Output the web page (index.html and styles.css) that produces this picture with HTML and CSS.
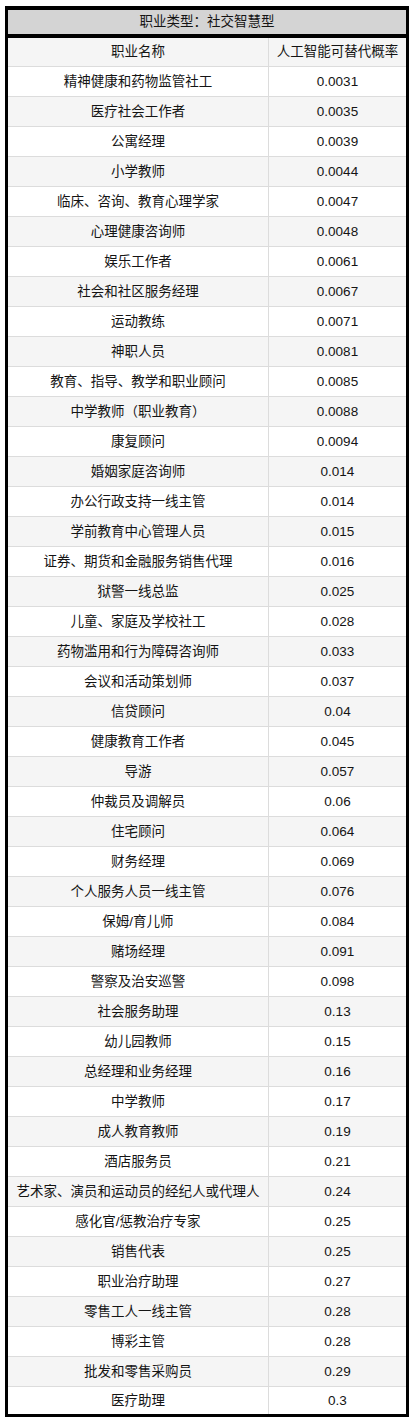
FILE: index.html
```html
<!DOCTYPE html>
<html lang="zh-CN">
<head>
<meta charset="utf-8">
<title>职业类型：社交智慧型</title>
<link rel="stylesheet" href="styles.css">
</head>
<body>
<div class="sheet">
  <div class="title">职业类型：社交智慧型</div>
  <div class="row head"><div class="c1">职业名称</div><div class="c2">人工智能可替代概率</div></div>
  <div class="row"><div class="c1">精神健康和药物监管社工</div><div class="c2">0.0031</div></div>
  <div class="row"><div class="c1">医疗社会工作者</div><div class="c2">0.0035</div></div>
  <div class="row"><div class="c1">公寓经理</div><div class="c2">0.0039</div></div>
  <div class="row"><div class="c1">小学教师</div><div class="c2">0.0044</div></div>
  <div class="row"><div class="c1">临床、咨询、教育心理学家</div><div class="c2">0.0047</div></div>
  <div class="row"><div class="c1">心理健康咨询师</div><div class="c2">0.0048</div></div>
  <div class="row"><div class="c1">娱乐工作者</div><div class="c2">0.0061</div></div>
  <div class="row"><div class="c1">社会和社区服务经理</div><div class="c2">0.0067</div></div>
  <div class="row"><div class="c1">运动教练</div><div class="c2">0.0071</div></div>
  <div class="row"><div class="c1">神职人员</div><div class="c2">0.0081</div></div>
  <div class="row"><div class="c1">教育、指导、教学和职业顾问</div><div class="c2">0.0085</div></div>
  <div class="row"><div class="c1">中学教师（职业教育）</div><div class="c2">0.0088</div></div>
  <div class="row"><div class="c1">康复顾问</div><div class="c2">0.0094</div></div>
  <div class="row"><div class="c1">婚姻家庭咨询师</div><div class="c2">0.014</div></div>
  <div class="row"><div class="c1">办公行政支持一线主管</div><div class="c2">0.014</div></div>
  <div class="row"><div class="c1">学前教育中心管理人员</div><div class="c2">0.015</div></div>
  <div class="row"><div class="c1">证券、期货和金融服务销售代理</div><div class="c2">0.016</div></div>
  <div class="row"><div class="c1">狱警一线总监</div><div class="c2">0.025</div></div>
  <div class="row"><div class="c1">儿童、家庭及学校社工</div><div class="c2">0.028</div></div>
  <div class="row"><div class="c1">药物滥用和行为障碍咨询师</div><div class="c2">0.033</div></div>
  <div class="row"><div class="c1">会议和活动策划师</div><div class="c2">0.037</div></div>
  <div class="row"><div class="c1">信贷顾问</div><div class="c2">0.04</div></div>
  <div class="row"><div class="c1">健康教育工作者</div><div class="c2">0.045</div></div>
  <div class="row"><div class="c1">导游</div><div class="c2">0.057</div></div>
  <div class="row"><div class="c1">仲裁员及调解员</div><div class="c2">0.06</div></div>
  <div class="row"><div class="c1">住宅顾问</div><div class="c2">0.064</div></div>
  <div class="row"><div class="c1">财务经理</div><div class="c2">0.069</div></div>
  <div class="row"><div class="c1">个人服务人员一线主管</div><div class="c2">0.076</div></div>
  <div class="row"><div class="c1">保姆/育儿师</div><div class="c2">0.084</div></div>
  <div class="row"><div class="c1">赌场经理</div><div class="c2">0.091</div></div>
  <div class="row"><div class="c1">警察及治安巡警</div><div class="c2">0.098</div></div>
  <div class="row"><div class="c1">社会服务助理</div><div class="c2">0.13</div></div>
  <div class="row"><div class="c1">幼儿园教师</div><div class="c2">0.15</div></div>
  <div class="row"><div class="c1">总经理和业务经理</div><div class="c2">0.16</div></div>
  <div class="row"><div class="c1">中学教师</div><div class="c2">0.17</div></div>
  <div class="row"><div class="c1">成人教育教师</div><div class="c2">0.19</div></div>
  <div class="row"><div class="c1">酒店服务员</div><div class="c2">0.21</div></div>
  <div class="row"><div class="c1">艺术家、演员和运动员的经纪人或代理人</div><div class="c2">0.24</div></div>
  <div class="row"><div class="c1">感化官/惩教治疗专家</div><div class="c2">0.25</div></div>
  <div class="row"><div class="c1">销售代表</div><div class="c2">0.25</div></div>
  <div class="row"><div class="c1">职业治疗助理</div><div class="c2">0.27</div></div>
  <div class="row"><div class="c1">零售工人一线主管</div><div class="c2">0.28</div></div>
  <div class="row"><div class="c1">博彩主管</div><div class="c2">0.28</div></div>
  <div class="row"><div class="c1">批发和零售采购员</div><div class="c2">0.29</div></div>
  <div class="row"><div class="c1">医疗助理</div><div class="c2">0.3</div></div>
</div>
</body>
</html>
```

FILE: styles.css
```css
html, body {
  margin: 0;
  padding: 0;
  background: #ffffff;
}
body {
  padding: 6px 0 0 5px;
  font-family: "Liberation Sans", "Noto Sans CJK SC", sans-serif;
  font-size: 13.5px;
  color: #141414;
}
.sheet {
  width: 398px;
  border: 3px solid #000000;
  border-top-width: 4px;
  background: #ffffff;
}
.title {
  height: 24px;
  line-height: 24px;
  text-align: center;
  background: #d4d4d4;
  border-bottom: 4px solid #000000;
}
.row {
  display: grid;
  grid-template-columns: 261px 137px;
  height: 29px;
  line-height: 29px;
  border-bottom: 1px solid #dcdcdc;
  text-align: center;
  white-space: nowrap;
}
.row.head {
  height: 28px;
  line-height: 28px;
}
.row:nth-child(even) {
  background: #f5f5f5;
}
.row:last-child {
  border-bottom: none;
  height: 27px;
  line-height: 27px;
}
.c1 {
  border-right: 1px solid #dcdcdc;
}
.c2 {
  letter-spacing: 0;
}
```
